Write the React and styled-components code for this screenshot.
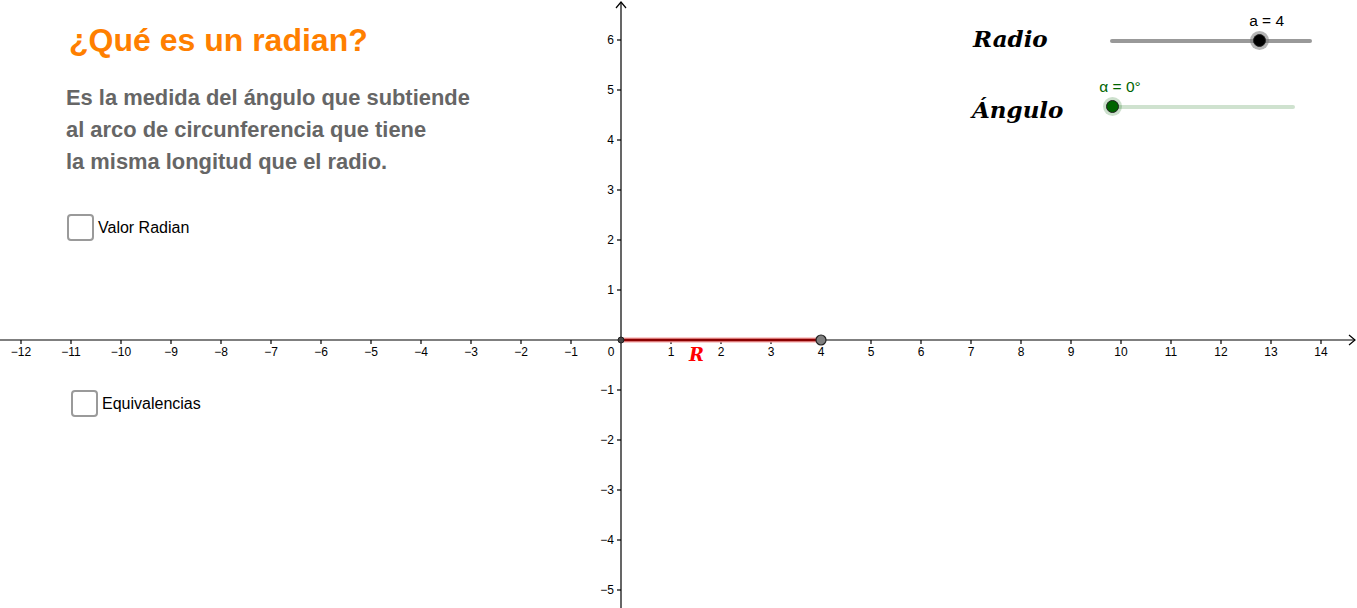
import styled, { createGlobalStyle } from "styled-components";

const GlobalStyle = createGlobalStyle`
  html, body {
    margin: 0;
    padding: 0;
    background: #fff;
    overflow: hidden;
  }
  body {
    font-family: "Liberation Sans", Arial, sans-serif;
  }
`;

const W = 1357;
const H = 608;
const OX = 621;
const OY = 340;
const U = 50;

const Canvas = styled.div`
  position: relative;
  width: ${W}px;
  height: ${H}px;
  overflow: hidden;
  background: #fff;
`;

const Graph = styled.svg`
  position: absolute;
  left: 0;
  top: 0;
`;

// texto y casillas de la izquierda
const LeftPanel = styled.div`
  position: absolute;
  left: 66px;
  top: 20px;
  display: flex;
  flex-direction: column;
  align-items: flex-start;
`;

const Title = styled.h1`
  margin: 0 0 0 3px;
  font-family: "Liberation Sans", Arial, sans-serif;
  font-size: 32px;
  font-weight: 700;
  color: #ff7f00;
  line-height: 40px;
`;

const Text = styled.p`
  margin: 22px 0 0;
  font-family: "Liberation Sans", Arial, sans-serif;
  font-size: 21.9px;
  font-weight: 700;
  color: #666666;
  line-height: 32px;
`;

const Check = styled.label`
  display: flex;
  align-items: center;
  gap: 4px;
  margin-top: ${(p) => p.gap}px;
  margin-left: ${(p) => p.indent}px;
  font-family: "Liberation Sans", Arial, sans-serif;
  font-size: 16px;
  color: #000;
`;

const Box = styled.span`
  width: 23px;
  height: 23px;
  border: 2px solid #9a9a9a;
  border-radius: 4px;
  background: #fff;
`;

// deslizadores de la derecha
const SliderPanel = styled.div`
  position: absolute;
  left: 972px;
  top: 0;
  display: flex;
  flex-direction: column;
`;

const SliderRow = styled.div`
  display: grid;
  grid-template-columns: 138px auto;
  align-items: center;
  height: 66px;
  padding-top: 16px;
  box-sizing: border-box;
`;

const SliderName = styled.div`
  margin-left: ${(p) => p.indent}px;
  font-family: "DejaVu Serif", "Liberation Serif", serif;
  font-style: italic;
  font-weight: 700;
  font-size: 23px;
  color: #000;
  line-height: 1;
  white-space: nowrap;
  transform: translateY(${(p) => p.shift}px);
`;

const Slider = styled.div`
  position: relative;
  margin-left: ${(p) => p.indent}px;
  width: ${(p) => p.w}px;
  height: 4px;
`;

const Track = styled.div`
  width: 100%;
  height: 4px;
  border-radius: 2px;
  background: ${(p) => p.color};
`;

const Knob = styled.div`
  position: absolute;
  top: 2px;
  width: 11px;
  height: 11px;
  margin: -7px 0 0 -7px;
  border-radius: 50%;
  border: 1.5px solid #222;
  background: ${(p) => p.color};
  box-shadow: 0 0 0 3px ${(p) => p.halo};
`;

const ValueLabel = styled.div`
  position: absolute;
  bottom: 13px;
  transform: translateX(-50%);
  white-space: nowrap;
  font-family: "Liberation Sans", Arial, sans-serif;
  font-size: 15.5px;
  color: ${(p) => p.color};
`;

const fmt = (n) => (n < 0 ? "\u2212" + Math.abs(n) : String(n));

function Axes() {
  const xs = [];
  for (let n = -12; n <= 14; n++) xs.push(n);
  const ys = [];
  for (let n = -5; n <= 6; n++) if (n !== 0) ys.push(n);
  return (
    <Graph width={W} height={H} viewBox={`0 0 ${W} ${H}`}>
      <g stroke="#000" strokeWidth="1.2" fill="none">
        <line x1="0" y1={OY} x2={W - 2} y2={OY} />
        <polyline points={`${W - 8},${OY - 5} ${W - 2},${OY} ${W - 8},${OY + 5}`} />
        <line x1={OX} y1={H} x2={OX} y2="2" />
        <polyline points={`${OX - 5},8 ${OX},2 ${OX + 5},8`} />
        {xs.map((n) =>
          n === 0 ? null : (
            <line key={"tx" + n} x1={OX + n * U} y1={OY} x2={OX + n * U} y2={OY + 4} />
          )
        )}
        {ys.map((n) => (
          <line key={"ty" + n} x1={OX - 4} y1={OY - n * U} x2={OX} y2={OY - n * U} />
        ))}
      </g>
      <g fontFamily="Liberation Sans, Arial, sans-serif" fontSize="12" fill="#000">
        {xs.map((n) => (
          <text
            key={"lx" + n}
            x={n === 0 ? OX - 10 : OX + n * U}
            y={OY + 16}
            textAnchor="middle"
          >
            {fmt(n)}
          </text>
        ))}
        {ys.map((n) => (
          <text key={"ly" + n} x={OX - 7} y={OY - n * U + 4} textAnchor="end">
            {fmt(n)}
          </text>
        ))}
      </g>
      <line x1={OX} y1={OY} x2={OX + 4 * U} y2={OY} stroke="#f4a0a0" strokeWidth="5" />
      <line x1={OX} y1={OY} x2={OX + 4 * U} y2={OY} stroke="#8b0000" strokeWidth="2.5" />
      <circle cx={OX} cy={OY} r="3" fill="#444" stroke="#222" strokeWidth="1" />
      <circle cx={OX + 4 * U} cy={OY} r="5" fill="#808080" stroke="#222" strokeWidth="1.2" />
      <text
        x="689"
        y="361"
        fontFamily="DejaVu Serif, Liberation Serif, serif"
        fontStyle="italic"
        fontWeight="700"
        fontSize="18"
        fill="#ff0000"
      >
        R
      </text>
    </Graph>
  );
}

function SliderControl({ indent, w, value, min, max, track, color, halo, label, labelColor }) {
  const pos = ((value - min) / (max - min)) * w;
  return (
    <Slider indent={indent} w={w}>
      <Track color={track} />
      <Knob color={color} halo={halo} style={{ left: pos }} />
      <ValueLabel color={labelColor} style={{ left: pos + 7 }}>
        {label}
      </ValueLabel>
    </Slider>
  );
}

export default function App() {
  return (
    <Canvas>
      <GlobalStyle />
      <Axes />
      <LeftPanel>
        <Title>¿Qué es un radian?</Title>
        <Text>
          Es la medida del ángulo que subtiende
          <br />
          al arco de circunferencia que tiene
          <br />
          la misma longitud que el radio.
        </Text>
        <Check gap={36} indent={1}>
          <Box />
          Valor Radian
        </Check>
        <Check gap={149} indent={5}>
          <Box />
          Equivalencias
        </Check>
      </LeftPanel>
      <SliderPanel>
        <SliderRow>
          <SliderName indent={1} shift={-3}>Radio</SliderName>
          <SliderControl
            indent={0}
            w={202}
            value={4}
            min={0}
            max={5.4}
            track="#999999"
            color="#000"
            halo="rgba(120,120,120,0.55)"
            label="a = 4"
            labelColor="#000"
          />
        </SliderRow>
        <SliderRow>
          <SliderName indent={0} shift={2}>Ángulo</SliderName>
          <SliderControl
            indent={3}
            w={182}
            value={0}
            min={0}
            max={360}
            track="#cfe2cf"
            color="#006400"
            halo="rgba(0,100,0,0.2)"
            label="α = 0°"
            labelColor="#006400"
          />
        </SliderRow>
      </SliderPanel>
    </Canvas>
  );
}
